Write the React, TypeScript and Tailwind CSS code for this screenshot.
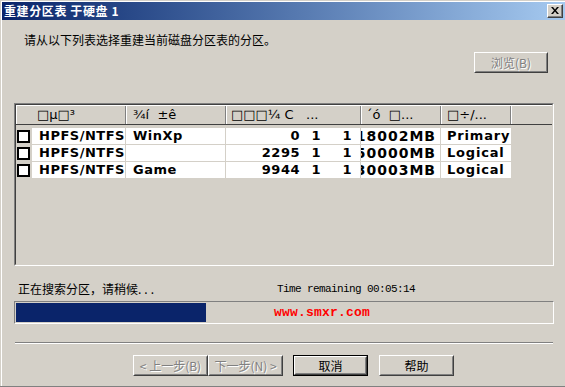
import React from 'react'

// Classic Win2000 "rebuild partition table" wizard page

const cjk = "font-['Noto_Sans_CJK_SC','DejaVu_Sans',sans-serif]"
const dv = "font-['DejaVu_Sans','Noto_Sans_CJK_SC',sans-serif]"

type Row = {
  fs: string
  label: string
  start: string
  h: string
  s: string
  size: string
  kind: string
}

const rows: Row[] = [
  { fs: 'HPFS/NTFS', label: 'WinXp', start: '0', h: '1', s: '1', size: '18002MB', kind: 'Primary' },
  { fs: 'HPFS/NTFS', label: '', start: '2295', h: '1', s: '1', size: '50000MB', kind: 'Logical' },
  { fs: 'HPFS/NTFS', label: 'Game', start: '9944', h: '1', s: '1', size: '30003MB', kind: 'Logical' },
]

function Button({
  children,
  disabled = false,
  isDefault = false,
  className = '',
}: {
  children: React.ReactNode
  disabled?: boolean
  isDefault?: boolean
  className?: string
}) {
  const face = (
    <div className="h-full w-full border border-t-white border-l-white border-r-[#404040] border-b-[#404040]">
      <div className="flex h-full w-full items-center justify-center border border-t-[#d4d0c8] border-l-[#d4d0c8] border-r-[#808080] border-b-[#808080]">
        <span
          className={`${cjk} whitespace-pre text-[12px] leading-none ${
            disabled ? 'text-[#808080] [text-shadow:1px_1px_0_#ffffff]' : 'text-black'
          }`}
        >
          {children}
        </span>
      </div>
    </div>
  )
  if (isDefault) {
    return <div className={`border border-black ${className}`}>{face}</div>
  }
  return <div className={className}>{face}</div>
}

function HeaderCell({ w, pl, children }: { w: string; pl: string; children?: React.ReactNode }) {
  return (
    <div
      className={`${w} ${pl} flex h-full shrink-0 items-center overflow-hidden whitespace-pre border-l border-l-white border-r border-r-[#808080] text-[13px] text-black ${dv}`}
    >
      {children}
    </div>
  )
}

export default function App() {
  return (
    <div className="h-[387px] w-[565px] overflow-hidden border-b border-[#808080] bg-[#d4d0c8] pl-px pt-px">
      <div className="flex h-full flex-col border-l border-t border-white">
        {/* title bar */}
        <div className="flex h-[18px] shrink-0 items-center bg-gradient-to-r from-[#0a246a] to-[#a6caf0] pl-[2px] pr-[2px]">
          <span className={`${cjk} whitespace-pre text-[12px] font-bold leading-none tracking-[0.6px] text-white`}>
            重建分区表 于硬盘 1
          </span>
          <div className="ml-auto h-[14px] w-[16px] border border-t-white border-l-white border-r-[#404040] border-b-[#404040] bg-[#d4d0c8]">
            <div className="flex h-full w-full items-center justify-center border-r border-b border-[#808080]">
              <svg width="8" height="7" viewBox="0 0 8 7">
                <path d="M0 0h2l2 2.5L6 0h2L5 3.5 8 7H6L4 4.5 2 7H0l3-3.5z" fill="#000" />
              </svg>
            </div>
          </div>
        </div>

        {/* instructions */}
        <div className={`mt-[13px] h-[14px] pl-[22px] text-[12px] leading-[14px] text-black ${cjk}`}>
          请从以下列表选择重建当前磁盘分区表的分区。
        </div>

        <div className="mt-[5px] flex justify-end pr-[17px]">
          <Button disabled className="h-[21px] w-[74px]">
            浏览(B)
          </Button>
        </div>

        {/* list view */}
        <div className="ml-[12px] mt-[30px] h-[163px] w-[540px] shrink-0 border border-t-[#808080] border-l-[#808080] border-r-white border-b-white">
          <div className="h-full w-full border border-t-[#404040] border-l-[#404040] border-r-[#d4d0c8] border-b-[#d4d0c8]">
            <div className="flex h-[20px] border-t border-t-white border-b border-b-[#404040]">
              <HeaderCell w="w-[110px]" pl="pl-[20px]">□µ□³</HeaderCell>
              <HeaderCell w="w-[100px]" pl="pl-[6px]">¾í  ±ê</HeaderCell>
              <HeaderCell w="w-[135px]" pl="pl-[4px]">□□□¼ C   ...</HeaderCell>
              <HeaderCell w="w-[80px]" pl="pl-[4px]">´ó  □...</HeaderCell>
              <HeaderCell w="w-[70px]" pl="pl-[5px]">□÷/...</HeaderCell>
              <div className="h-full flex-1 border-l border-l-white" />
            </div>

            <div className={`flex flex-col gap-px pt-[3px] text-[13px] font-bold tracking-[0.5px] text-black ${dv}`}>
              {rows.map((r, i) => (
                <div key={i} className="flex h-[16px] items-center leading-[16px]">
                  <div className="ml-px h-[13px] w-[13px] shrink-0 border-2 border-black bg-white" />
                  <div className="ml-[2px] h-full w-[93px] shrink-0 overflow-hidden whitespace-nowrap bg-white pl-[7px]">
                    {r.fs}
                  </div>
                  <div className="ml-px h-full w-[99px] shrink-0 overflow-hidden whitespace-nowrap bg-white pl-[7px]">
                    {r.label}
                  </div>
                  <div className="ml-px flex h-full w-[134px] shrink-0 overflow-hidden whitespace-nowrap bg-white pr-[8px]">
                    <span className="flex-1 text-right">{r.start}</span>
                    <span className="w-[21px] text-right">{r.h}</span>
                    <span className="w-[31px] text-right">{r.s}</span>
                  </div>
                  <div className="ml-px flex h-full w-[79px] shrink-0 justify-end overflow-hidden whitespace-nowrap bg-white pr-[4px]">
                    <span className="shrink-0 text-[14px] tracking-[1px]">{r.size}</span>
                  </div>
                  <div className="ml-px h-full w-[70px] shrink-0 overflow-hidden whitespace-nowrap bg-white pl-[6px] tracking-[0.8px]">
                    {r.kind}
                  </div>
                </div>
              ))}
            </div>
          </div>
        </div>

        {/* status */}
        <div className="mt-[16px] flex h-[14px] items-center pl-[16px] text-black">
          <span className={`w-[259px] text-[12px] leading-[14px] ${cjk}`}>
            正在搜索分区，请稍候<span className="tracking-[3px]">...</span>
          </span>
          <span className="font-['Liberation_Mono',monospace] text-[11px] leading-[14px] tracking-[-0.6px]">
            Time remaining 00:05:14
          </span>
        </div>

        {/* progress */}
        <div className="ml-[12px] mt-[5px] flex h-[23px] w-[540px] shrink-0 items-center border border-t-[#808080] border-l-[#808080] border-r-white border-b-white p-px">
          <div className="h-full w-[190px] bg-[#0a246a]" />
          <span className="ml-[68px] font-['Liberation_Mono',monospace] text-[13px] font-bold leading-none tracking-[0.2px] text-[#ff0000]">
            www.smxr.com
          </span>
        </div>

        {/* separator */}
        <div className="ml-[13px] mt-[18px] h-[2px] w-[538px] shrink-0 border-t border-t-[#808080] border-b border-b-white" />

        {/* wizard buttons */}
        <div className="mt-[11px] flex h-[21px] pl-[131px]">
          <Button disabled className="h-[21px] w-[75px]">
            {'< 上一步(B)'}
          </Button>
          <Button disabled className="h-[21px] w-[75px]">
            {'下一步(N) >'}
          </Button>
          <Button isDefault className="ml-[10px] h-[21px] w-[75px]">
            取消
          </Button>
          <Button className="ml-[11px] h-[21px] w-[75px]">帮助</Button>
        </div>
      </div>
    </div>
  )
}
